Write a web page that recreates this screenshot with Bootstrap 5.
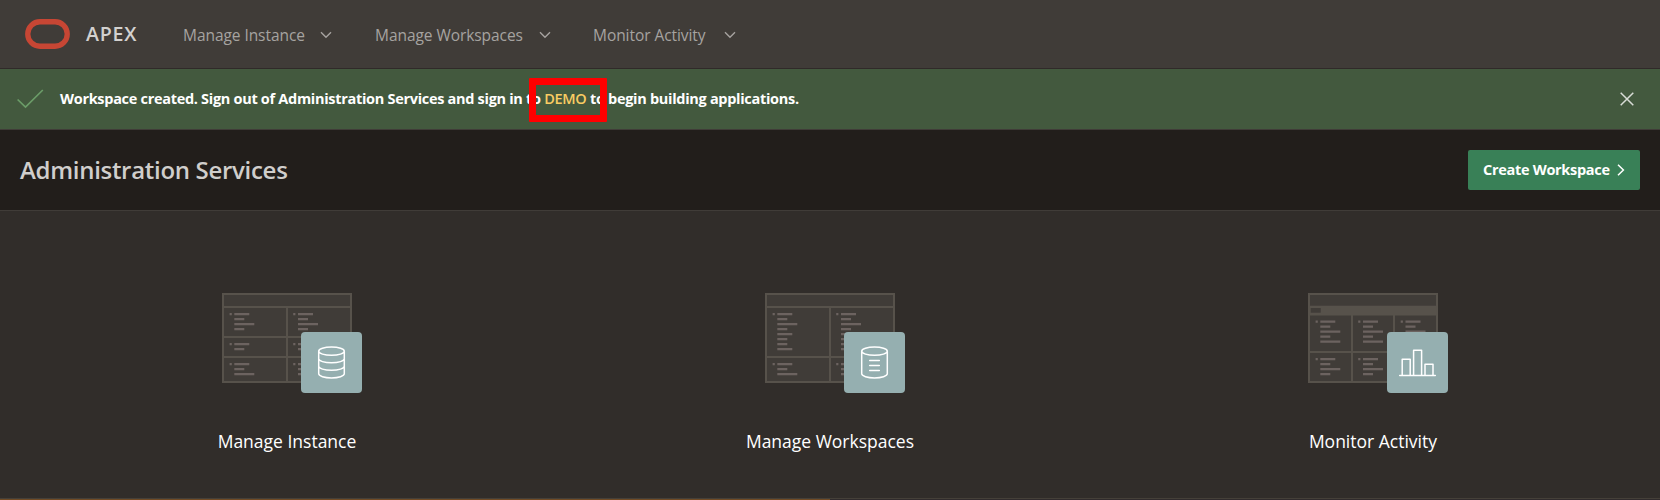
<!DOCTYPE html>
<html lang="en">
<head>
<meta charset="utf-8">
<title>Administration Services</title>
<link href="https://cdn.jsdelivr.net/npm/bootstrap@5.3.0/dist/css/bootstrap.min.css" rel="stylesheet">
<style>
body{font-family:"Open Sans","Noto Sans",sans-serif;background:#312d2a;color:#fff;width:100%;height:500px;overflow:hidden}
.topbar{height:69px;background:#403c38;border-bottom:1px solid #302a29;padding:0 0 0 25px}
.brand-word{font-size:19.6px;font-weight:600;letter-spacing:.75px;color:#d3d1cf;margin-left:16px;width:97px;line-height:26px}
.menu-item{font-size:15.5px;color:#a6a3a0;line-height:24px;padding:2px 0 0;white-space:nowrap}
.menu-item svg{margin-left:auto}
.notice{height:61px;background:#43593e;border-bottom:1px solid #403c38;padding:0 26px 0 17px;font-size:14.5px;font-weight:700;white-space:nowrap}
.notice-text{margin-left:16px;letter-spacing:-.3px}
.demo-link{color:#f9cc63;font-weight:600;text-decoration:none}
.marker{position:absolute;left:-15.5px;top:-11px;width:78px;height:44px;border:7px solid #f00;border-radius:1px}
.titlebar{height:81px;background:#221e1b;border-bottom:1px solid #403c38;padding:0 20px}
.titlebar h1{font-size:24px;font-weight:600;color:#d0cecc;letter-spacing:-.3px;line-height:32px}
.create-btn{width:172px;height:40px;background:#398057;border-radius:2px;color:#fff;font-size:14.5px;font-weight:700;letter-spacing:-.3px;padding:0 15px;border:0;white-space:nowrap}
.tiles{height:287px;padding:82px 15.5px 0}
.tile-label{font-size:17.5px;line-height:26px;margin-top:45px;white-space:nowrap}
.art{overflow:visible}
.cells{fill:#403c38;stroke:#57524b;stroke-width:2}
.rows{fill:none;stroke:#6c6360;stroke-width:2.2}
.glyph{fill:none;stroke:#fff;stroke-width:1.5;stroke-linejoin:round;stroke-linecap:round}
.stripe{height:3px;background:#302b2c;border-top:1px solid #454039}
.stripe div{height:2px;background:#704a24}
</style>
</head>
<body>
<nav class="topbar d-flex align-items-center">
  <svg width="45" height="30" viewBox="0 0 45 30" style="margin-top:-1px"><rect x="2.75" y="2.75" width="39.5" height="24.5" rx="12.25" fill="none" stroke="#c74634" stroke-width="5.3"/></svg>
  <span class="brand-word">APEX</span>
  <div class="menu-item d-flex align-items-center" style="width:149px"><span style="letter-spacing:-.06px">Manage Instance</span><svg width="12" height="8" viewBox="0 0 12 8" fill="none" stroke="#a6a3a0" stroke-width="1.4"><path d="M1 1.2 6 6.2 11 1.2"/></svg></div>
  <div class="menu-item d-flex align-items-center" style="width:176px;margin-left:43px"><span style="letter-spacing:-.06px">Manage Workspaces</span><svg width="12" height="8" viewBox="0 0 12 8" fill="none" stroke="#a6a3a0" stroke-width="1.4"><path d="M1 1.2 6 6.2 11 1.2"/></svg></div>
  <div class="menu-item d-flex align-items-center" style="width:143px;margin-left:42px"><span style="letter-spacing:-.06px">Monitor Activity</span><svg width="12" height="8" viewBox="0 0 12 8" fill="none" stroke="#a6a3a0" stroke-width="1.4"><path d="M1 1.2 6 6.2 11 1.2"/></svg></div>
</nav>
<div class="notice d-flex align-items-center" role="status">
  <svg width="27" height="20" viewBox="0 0 27 20" fill="none" stroke="#6b9c68" stroke-width="1.7"><path d="M.6 10.5 8.5 18 25.8 1"/></svg>
  <span class="notice-text">Workspace created. Sign out of Administration Services and sign in to <a href="#" class="demo-link position-relative">DEMO<span class="marker"></span></a> to begin building applications.</span>
  <svg class="ms-auto" width="14" height="14" viewBox="0 0 14 14" fill="none" stroke="#d8dcd6" stroke-width="1.5"><path d="M.7.7 13.3 13.3M13.3.7.7 13.3"/></svg>
</div>
<header class="titlebar d-flex align-items-center justify-content-between">
  <h1 class="mb-0">Administration Services</h1>
  <button class="create-btn d-flex align-items-center justify-content-between">Create Workspace<svg width="8" height="12" viewBox="0 0 8 12" fill="none" stroke="#fff" stroke-width="1.5"><path d="M1 .8 6.4 6 1 11.2"/></svg></button>
</header>
<main class="tiles">
  <div class="row g-0 text-center">
    <div class="col-4">
      <svg class="art d-block mx-auto" width="130" height="90" viewBox="0 0 130 90">
        <path class="cells" d="M1 1H129V89H1ZM1 14H129M65 14V89M1 44H129M1 64H129"/>
        <path class="rows" d="M7.6 21.2h2.2M12.3 21.2h15M12.3 26.2h10M12.3 31.2h20M12.3 36.2h10M7.6 51.2h2.2M12.3 51.2h15M12.3 56.2h10M7.6 71.2h2.2M12.3 71.2h15M12.3 76.2h10M12.3 81.2h20M71.2 21.2h2.2M76 21.2h15M76 26.2h10M76 31.2h20M76 36.2h10M71.2 51.2h2.2M76 51.2h15M76 56.2h10M71.2 71.2h2.2M76 71.2h15M76 76.2h10M76 81.2h20"/>
        <rect x="79" y="39" width="61" height="61" rx="4" fill="#95afb0"/>
        <path class="glyph" d="M96.7 58.2a12.8 4.1 0 0 1 25.6 0a12.8 4.1 0 0 1 -25.6 0V80.8a12.8 4.1 0 0 0 25.6 0V58.2M96.7 65.7a12.8 4.1 0 0 0 25.6 0M96.7 73.2a12.8 4.1 0 0 0 25.6 0"/>
      </svg>
      <div class="tile-label">Manage Instance</div>
    </div>
    <div class="col-4">
      <svg class="art d-block mx-auto" width="130" height="90" viewBox="0 0 130 90">
        <path class="cells" d="M1 1H129V89H1ZM1 14H129M65 14V89M1 64H129"/>
        <path class="rows" d="M7.6 21.2h2.2M12.3 21.2h15M12.3 26.2h10M12.3 31.2h20M12.3 36.2h10M12.3 41.2h15M12.3 46.2h10M12.3 51.2h10M12.3 56.2h15M7.6 71.2h2.2M12.3 71.2h15M12.3 76.2h10M12.3 81.2h20M71.2 21.2h2.2M76 21.2h15M76 26.2h10M76 31.2h20M76 36.2h10M76 41.2h15M76 46.2h10M76 51.2h10M76 56.2h15M71.2 71.2h2.2M76 71.2h15M76 76.2h10M76 81.2h20"/>
        <rect x="79" y="39" width="61" height="61" rx="4" fill="#95afb0"/>
        <path class="glyph" d="M96.7 58.2a12.8 4.1 0 0 1 25.6 0a12.8 4.1 0 0 1 -25.6 0V80.8a12.8 4.1 0 0 0 25.6 0V58.2M104.7 67.5h9.6M104.7 72.5h9.6M104.7 77.5h9.6"/>
      </svg>
      <div class="tile-label">Manage Workspaces</div>
    </div>
    <div class="col-4">
      <svg class="art d-block mx-auto" width="130" height="90" viewBox="0 0 130 90">
        <path class="cells" d="M1 1H129V89H1ZM1 59H129M44 22V89M86 22V89"/>
        <path fill="#57524b" d="M1 12.7H129V22.5H1Z"/><path fill="#403c38" d="M2.7 15h10v4.7h-10z"/>
        <path class="rows" d="M7.6 28.7h2.2M12.3 28.7h15M12.3 33.7h10M12.3 38.7h20M12.3 43.7h10M12.3 48.7h20M7.6 66.2h2.2M12.3 66.2h15M12.3 71.2h10M12.3 76.2h20M12.3 81.2h10M50.2 28.7h2.2M55 28.7h15M55 33.7h10M55 38.7h20M55 43.7h10M55 48.7h20M50.2 66.2h2.2M55 66.2h15M55 71.2h10M55 76.2h20M55 81.2h10M92.7 28.7h2.2M97.5 28.7h15M97.5 33.7h10M97.5 38.7h20"/>
        <rect x="79" y="39" width="61" height="61" rx="4" fill="#95afb0"/>
        <path class="glyph" d="M91.7 82.4H127.3M94.2 82.4V66.2h8V82.4M105.6 82.4V57.2h8V82.4M117 82.4V71.2h8V82.4"/>
      </svg>
      <div class="tile-label">Monitor Activity</div>
    </div>
  </div>
</main>
<div class="stripe"><div class="w-50"></div></div>
</body>
</html>
